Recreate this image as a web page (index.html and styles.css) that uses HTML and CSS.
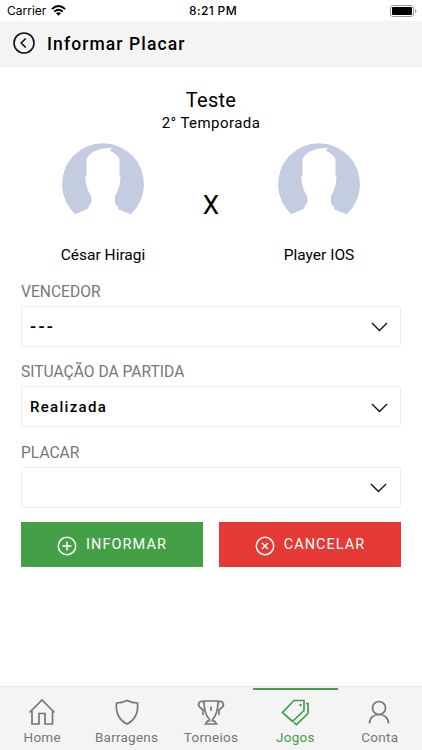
FILE: index.html
```html
<!DOCTYPE html>
<html lang="pt-BR">
<head>
<meta charset="utf-8">
<title>Informar Placar</title>
<link rel="stylesheet" href="styles.css">
</head>
<body>
<div class="status">
  <div class="carrier"><span>Carrier</span>
    <svg width="15" height="11" viewBox="0 0 15 11"><g fill="none" stroke="#000" stroke-width="1.9"><path d="M.8 4.1Q7.5-2 14.2 4.1"/><path d="M3.2 6.6Q7.5 2.8 11.8 6.6"/></g><path d="M5 8.3Q7.5 6.3 10 8.3L7.5 10.8Z"/></svg>
  </div>
  <div class="clock">8:21 PM</div>
  <svg class="battery" width="27" height="12" viewBox="0 0 27 12"><rect x=".5" y=".5" width="23" height="11" rx="2.6" fill="#fff" stroke="#999"/><rect x="2" y="2" width="20" height="8" rx="1"/><path d="M25 4Q26.5 4.4 26.5 6T25 8Z" fill="#999"/></svg>
</div>
<header class="header">
  <svg width="22" height="22" viewBox="0 0 22 22" fill="none" stroke="#111" stroke-width="1.6"><circle cx="11" cy="11" r="10"/><path d="M12.700 6.500L8.200 11l4.500 4.500"/></svg>
  <h1>Informar Placar</h1>
</header>
<main>
  <h2>Teste</h2>
  <p class="season">2° Temporada</p>
  <section class="match">
    <div class="player">
      <svg class="avatar" width="82" height="72" viewBox="0 0 82 72"><path d="M13.200 70.300A41 41 0 1 1 68.800 70.300L56.500 65.500Q55.500 61 53 60V52C56 47 58.500 40 58.500 32.500H57.500V15Q54 9.500 48 6.800L49.800 3.800C38 4 27 8 24.500 15.500V32.500H23.200C23.500 40 26 48 29.300 52V59Q26.500 61 26.300 64.500Z" fill="#c3cce1"/></svg>
      <span class="name">César Hiragi</span>
    </div>
    <div class="versus">X</div>
    <div class="player">
      <svg class="avatar" width="82" height="72" viewBox="0 0 82 72"><path d="M13.200 70.300A41 41 0 1 1 68.800 70.300L56.500 65.500Q55.500 61 53 60V52C56 47 58.500 40 58.500 32.500H57.500V15Q54 9.500 48 6.800L49.800 3.800C38 4 27 8 24.500 15.500V32.500H23.200C23.500 40 26 48 29.300 52V59Q26.500 61 26.300 64.500Z" fill="#c3cce1"/></svg>
      <span class="name">Player IOS</span>
    </div>
  </section>
  <form>
    <div class="field"><span class="label">VENCEDOR</span><div class="select"><span class="dashes">---</span><svg width="17" height="10" viewBox="0 0 17 10"><path d="M1 1l7.500 7.500L16 1"/></svg></div></div>
    <div class="field"><span class="label">SITUAÇÃO DA PARTIDA</span><div class="select"><span>Realizada</span><svg width="17" height="10" viewBox="0 0 17 10"><path d="M1 1l7.500 7.500L16 1"/></svg></div></div>
    <div class="field"><span class="label">PLACAR</span><div class="select empty"><span></span><svg width="17" height="10" viewBox="0 0 17 10"><path d="M1 1l7.500 7.500L16 1"/></svg></div></div>
    <div class="actions">
      <div class="button green"><svg width="20" height="20" viewBox="0 0 20 20"><circle cx="10" cy="10" r="8.700"/><path d="M10 5.500v9M5.500 10h9"/></svg><span>INFORMAR</span></div>
      <div class="button red"><svg width="20" height="20" viewBox="0 0 20 20"><circle cx="10" cy="10" r="8.700"/><path d="M7 7l6 6M13 7l-6 6"/></svg><span>CANCELAR</span></div>
    </div>
  </form>
</main>
<nav>
  <div class="tab"><svg width="28" height="28" viewBox="0 0 28 28"><path d="M1.500 14.500L14 2 26.500 14.500M4 13V26H11V15.500H17V26H24.500V13"/></svg><span>Home</span></div>
  <div class="tab"><svg width="28" height="28" viewBox="0 0 28 28"><path d="M3.500 5Q9 5 14 2.500Q19 5 24.500 5C25.500 15.500 21 22.500 14 26C7 22.500 2.500 15.500 3.500 5Z"/></svg><span>Barragens</span></div>
  <div class="tab"><svg width="28" height="28" viewBox="0 0 28 28"><path d="M7 3H21C21 13 19 18 15.500 21.500V23H17.500L19.500 26H8.500L10.500 23H12.500V21.500C9 18 7 13 7 3ZM7 4C2 2 .5 6 2.500 9L6 12V17M21 4C26 2 27.500 6 25.500 9L22 12V17M14 8.500V13"/></svg><span>Torneios</span></div>
  <div class="tab active"><svg width="28" height="28" viewBox="0 0 28 28"><path d="M13 2.500H23V12.500L11.500 23.500 1.500 14.500ZM25 5.500H27V15.500L15.500 26.500 13 24.500"/><circle cx="19.500" cy="7" r=".5"/></svg><span>Jogos</span></div>
  <div class="tab"><svg width="28" height="28" viewBox="0 0 28 28"><circle cx="13" cy="10" r="6.500"/><path d="M3.500 25.500C3.500 20 7.500 16.500 13 16.500S22.500 20 22.500 25.500"/></svg><span>Conta</span></div>
</nav>
</body>
</html>
```
FILE: styles.css
```css
* { box-sizing: border-box; }
body { margin: 0; height: 750px; display: flex; flex-direction: column; overflow: hidden; background: #fff; color: #000; font-family: Roboto, "Liberation Sans", sans-serif; }
svg { display: block; flex: none; overflow: visible; }
h1, h2, p { margin: 0; font-weight: 400; }
.status { height: 21px; display: grid; grid-template-columns: 1fr auto 1fr; align-items: center; padding: 0 5px 0 7px; font: 12px Inter, sans-serif; }
.carrier { display: flex; align-items: center; gap: 5px; letter-spacing: 0; }
.clock { font-weight: 500; font-size: 12px; letter-spacing: .35px; padding-left: 2px; }
.battery { justify-self: end; }
.header { height: 46px; display: flex; align-items: center; gap: 12px; padding-left: 13px; background: #f4f4f4; border-bottom: 2px solid #eee; }
.header h1 { font-size: 17.500px; font-weight: 500; letter-spacing: 1.100px; padding-top: 1px; }
main { flex: 1; padding: 21px 21px 0; }
h2 { font-size: 20px; line-height: 25px; text-align: center; letter-spacing: .3px; }
.season { font-size: 15px; line-height: 20px; text-align: center; letter-spacing: .45px; }
.match { display: grid; grid-template-columns: 164px 52px 164px; height: 146.500px; padding-top: 11px; }
.player { display: flex; flex-direction: column; align-items: center; }
.name { margin-top: 29px; font-size: 15.500px; line-height: 20px; white-space: nowrap; }
.versus { padding-top: 45px; text-align: center; font-size: 26px; line-height: 32px; }
.field { height: 80.500px; }
.label { display: block; height: 26px; font-size: 15.600px; line-height: 25px; color: #777; }
.select { height: 41px; display: flex; align-items: center; justify-content: space-between; padding: 0 12px 0 8px; border: 1px solid #eee; border-radius: 3px; font-size: 15px; font-weight: 500; letter-spacing: 1.300px; }
.select svg { fill: none; stroke: #111; stroke-width: 1.400; margin-top: 2px; }
.dashes { font-size: 18px; letter-spacing: 2.300px; }
.empty { padding-right: 13px; }
.actions { display: grid; grid-template-columns: 1fr 1fr; gap: 16px; padding-top: 1px; }
.button { height: 45px; display: flex; align-items: center; justify-content: center; gap: 9px; color: #fff; font-size: 14.500px; font-weight: 400; letter-spacing: 1.050px; }
.button svg { fill: none; stroke: #fff; stroke-width: 1.500; margin-top: 2px; }
.green { background: #43a047; }
.red { background: #e53935; }
nav { height: 64px; display: grid; grid-template-columns: repeat(5, 1fr); padding-top: 1px; background: #f4f4f4; border-top: 1px solid #e8e8e8; }
.tab { display: flex; flex-direction: column; align-items: center; padding-top: 8px; border-top: 2px solid transparent; color: #777; font-size: 13.500px; line-height: 18px; letter-spacing: .25px; }
.tab svg { fill: none; stroke: currentColor; stroke-width: 1.700; }
.tab span { margin-top: 2px; }
.active { color: #43a047; border-top-color: #43a047; }
```
